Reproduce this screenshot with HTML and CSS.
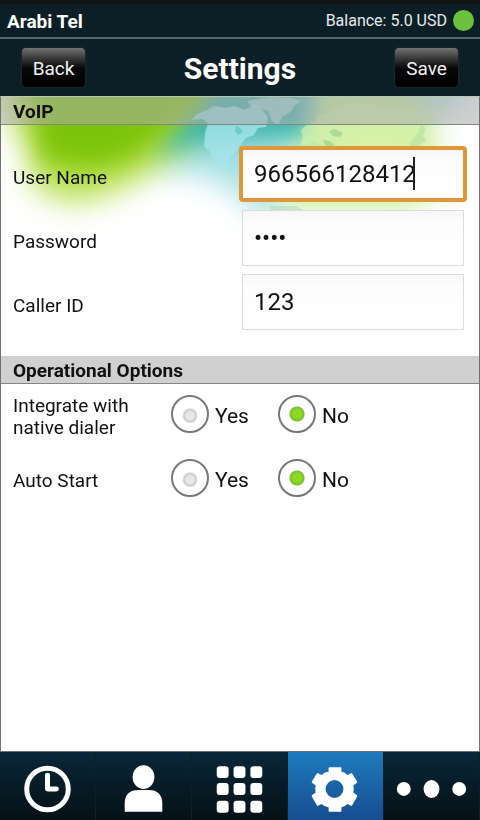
FILE: index.html
```html
<!DOCTYPE html>
<html lang="en">
<head>
<meta charset="utf-8">
<meta name="viewport" content="width=device-width, initial-scale=1">
<title>Arabi Tel - Settings</title>
<link rel="stylesheet" href="styles.css">
</head>
<body>
<div class="status">
  <strong class="brand">Arabi Tel</strong>
  <span class="balance">Balance: 5.0 USD</span>
  <span class="online"></span>
</div>
<header class="titlebar">
  <button class="action" type="button">Back</button>
  <h1>Settings</h1>
  <button class="action" type="button">Save</button>
</header>
<main class="panel">
  <svg class="art" viewBox="0 0 480 200" preserveAspectRatio="none" aria-hidden="true">
    <defs>
      <filter id="soft" x="-50%" y="-50%" width="200%" height="200%" color-interpolation-filters="sRGB"><feGaussianBlur stdDeviation="15"/></filter>
      <filter id="blend" x="-50%" y="-50%" width="200%" height="200%" color-interpolation-filters="sRGB"><feGaussianBlur stdDeviation="11"/></filter>
      <filter id="edge" x="-10%" y="-10%" width="120%" height="120%"><feGaussianBlur stdDeviation="0.7"/></filter>
    </defs>
    <path d="M150-60H480L460 8 300 40 275 130 225 86 150 66Z" fill="#a6dfe2" filter="url(#soft)"/>
    <path d="M-10-60H215L212 20 165 66 120 92 75 106 34 92 26 50 8 20Z" fill="#b4de46" filter="url(#soft)"/>
    <path d="M310-20H410L435 30 436 100 400 112 280 112 300 40Z" fill="#c9f09a" filter="url(#soft)"/>
    <path d="M214-40H315L308 40 250 42 190 48 150 54 178 28Z" fill="#3fb6ac" filter="url(#blend)"/>
    <path d="M15-60H222L200 12 165 34 128 62 88 70 42 62 36 30Z" fill="#7cc40a" filter="url(#blend)"/>
    <ellipse cx="378" cy="54" rx="44" ry="16" fill="#f1f08c" filter="url(#blend)"/>
    <g filter="url(#edge)">
      <path d="M191 23 197 17 207 13 214 9 226 11 234 9 245 13 254 8 262 12 268 20 266 30 258 31 254 38 246 41 240 48 236 55 230 60 229 66 233 70 234 77 230 75 225 71 219 70 214 65 210 55 204 49 205 35 208 26 202 22Z" fill="#a5e5ec" opacity=".8"/>
      <path d="M236 29 240 31 243 35 238 38 235 34Z" fill="#55bcb4" opacity=".6"/>
      <path d="M247 4 258 2 270 0 292 1 302 4 294 9 291 15 283 19 278 28 272 24 268 14 258 10 252 11Z" fill="#b5dfe0" opacity=".7"/>
      <path d="M301 48 303 39 301 33 308 27 315 25 318 18 327 17 334 11 343 9 352 5 370 7 390 10 412 13 432 17 437 22 428 27 427 34 420 46 414 52 340 53 336 46 328 43 322 47 314 44 308 48Z" fill="#d3f1ae" opacity=".7"/>
      <path d="M269 109 296 109 305 114 290 120 274 116Z" fill="#a5dcb4" opacity=".5"/>
      <path d="M329 34 335 32 343 36 341 40 333 39ZM323 43 330 44 335 48 327 50Z" fill="#8fcf94" opacity=".6"/>
      <path d="M414 41 419 36 422 27 426 31 424 40 428 44 421 47 418 52 410 48Z" fill="#b4dfa4" opacity=".6"/>
    </g>
  </svg>
  <section>
    <h2>VoIP</h2>
    <div class="fields">
      <label for="user">User Name</label>
      <div class="focused">
        <input id="user" type="text" value="966566128412">
        <span class="caret"></span>
      </div>
      <label for="pass">Password</label>
      <input id="pass" type="password" value="1234">
      <label for="caller">Caller ID</label>
      <input id="caller" type="text" value="123">
    </div>
  </section>
  <section>
    <h2>Operational Options</h2>
    <div class="options">
      <fieldset>
        <legend>Integrate with native dialer</legend>
        <label><input type="radio" name="native">Yes</label>
        <label><input type="radio" name="native" checked>No</label>
      </fieldset>
      <fieldset>
        <legend>Auto Start</legend>
        <label><input type="radio" name="auto">Yes</label>
        <label><input type="radio" name="auto" checked>No</label>
      </fieldset>
    </div>
  </section>
</main>
<nav class="tabs">
  <a href="#recent" aria-label="Recent calls">
    <svg viewBox="0 0 96 68"><circle cx="48" cy="37" r="21" fill="none" stroke="#fff" stroke-width="5"/><path d="M48 23V37H57" fill="none" stroke="#fff" stroke-width="5" stroke-linecap="round" stroke-linejoin="round"/></svg>
  </a>
  <a href="#contacts" aria-label="Contacts">
    <svg viewBox="0 0 96 68"><ellipse cx="48" cy="25" rx="11" ry="12"/><path d="M29 60V52Q29 38 43 38H53Q67 38 67 52V60Z"/></svg>
  </a>
  <a href="#keypad" aria-label="Keypad">
    <svg viewBox="0 0 96 68"><rect x="25" y="14" width="12" height="12" rx="3"/><rect x="42" y="14" width="12" height="12" rx="3"/><rect x="59" y="14" width="12" height="12" rx="3"/><rect x="25" y="31" width="12" height="12" rx="3"/><rect x="42" y="31" width="12" height="12" rx="3"/><rect x="59" y="31" width="12" height="12" rx="3"/><rect x="25" y="49" width="12" height="12" rx="3"/><rect x="42" y="49" width="12" height="12" rx="3"/><rect x="59" y="49" width="12" height="12" rx="3"/></svg>
  </a>
  <a class="current" href="#settings" aria-label="Settings">
    <svg viewBox="0 0 96 68"><path fill-rule="evenodd" d="M42 16H53V20Q57 21 60 24L64 22 69 30 65 33Q66 37 65 41L69 44 64 53 60 51Q57 54 53 55V59H42V55Q37 54 34 51L30 53 25 44 29 41Q28 37 29 33L25 30 30 22 34 24Q37 21 42 20ZM47 27A10 10 0 1 0 47 47A10 10 0 1 0 47 27Z" stroke="#fff" stroke-width="2" stroke-linejoin="round"/></svg>
  </a>
  <a href="#more" aria-label="More">
    <svg viewBox="0 0 96 68"><ellipse cx="20" cy="37" rx="7" ry="7"/><ellipse cx="48" cy="37" rx="8" ry="9"/><ellipse cx="76" cy="37" rx="7" ry="7"/></svg>
  </a>
</nav>
</body>
</html>
```
FILE: styles.css
```css
* {
  box-sizing: border-box;
}

body {
  margin: 0;
  min-height: 100vh;
  display: flex;
  flex-direction: column;
  background: #fff;
  color: #111;
  font: 19px/22px Roboto, "Liberation Sans", sans-serif;
}

.status {
  display: flex;
  align-items: center;
  height: 39px;
  padding: 2px 6px 0 7px;
  border-top: 4px solid #141414;
  border-bottom: 2px solid #50696c;
  background: #0d1f26;
  color: #fff;
}

.brand {
  flex: 1;
  font-weight: 700;
}

.balance {
  padding-bottom: 2px;
  font-size: 16px;
  color: #e6ecee;
}

.online {
  width: 21px;
  height: 21px;
  margin: 0 0 3px 6px;
  border-radius: 50%;
  background: #6cc23e;
}

.titlebar {
  display: flex;
  align-items: center;
  justify-content: space-between;
  height: 57px;
  padding: 0 22px;
  background: #0d1f26;
}

h1 {
  margin: 2px 0 0;
  font-size: 30px;
  line-height: 36px;
  color: #fff;
}

.action {
  width: 63px;
  height: 39px;
  padding: 2px 0 0;
  border: 0;
  border-radius: 4px;
  background: linear-gradient(#737373, #3c3c3c 25%, #070707 52%, #000);
  box-shadow: 0 0 2px #39413f;
  color: #f2f2f2;
  font: 19px/22px Roboto, "Liberation Sans", sans-serif;
}

.panel {
  position: relative;
  flex: 1;
  border: 1px solid #707070;
  border-top-color: #b9c9b4;
}

.art {
  position: absolute;
  inset: 0 0 auto;
  width: 100%;
  height: 200px;
  z-index: -1;
}

h2 {
  margin: 0;
  padding: 4px 12px 1px;
  border-bottom: 1px solid #858585;
  background: rgba(170, 170, 170, 0.55);
  font-size: 19px;
  line-height: 22px;
}

.fields {
  display: grid;
  grid-template-columns: 1fr 222px;
  grid-auto-rows: 56px;
  gap: 8px 0;
  align-items: center;
  padding: 21px 15px 26px 12px;
}

.fields > label {
  padding-top: 8px;
}

.fields input {
  display: block;
  width: 100%;
  height: 56px;
  padding: 0 11px;
  border: 1px solid #dcdcdc;
  outline: 0;
  background: linear-gradient(#f6f6f6, #fdfdfd 20%, #fff);
  color: #111;
  font: 24px/30px Roboto, "Liberation Sans", sans-serif;
}

.focused {
  position: relative;
  margin: 0 -3px;
}

.fields .focused input {
  border: 4px solid #e0973a;
  border-radius: 4px;
}

.caret {
  position: absolute;
  left: 174px;
  top: 11px;
  width: 2px;
  height: 33px;
  background: #222;
}

.options {
  padding: 0 12px;
}

fieldset {
  display: flex;
  align-items: center;
  height: 64px;
  margin: 0;
  padding: 0;
  border: 0;
}

legend {
  float: left;
  width: 158px;
  padding: 2px 30px 0 0;
}

fieldset label {
  display: flex;
  align-items: center;
  gap: 6px;
  width: 107px;
  font-size: 21px;
}

input[type="radio"] {
  appearance: none;
  width: 38px;
  height: 38px;
  margin: 0 0 4px;
  border: 2px solid #77777a;
  border-radius: 50%;
  background: radial-gradient(circle at 50% 55%, #e8e8e8 4px, #c8c8c8 6px, #fff 8px);
}

input[type="radio"]:checked {
  background: radial-gradient(circle, #8ada20 4px, #78bd32 7px, #fff 8px);
}

.tabs {
  display: grid;
  grid-template-columns: repeat(5, 1fr);
  height: 68px;
}

.tabs a {
  background: linear-gradient(#092638, #061116);
  border-right: 1px solid #0c2027;
}

.tabs .current {
  background: linear-gradient(#1d7bbd, #174d8f);
}

.tabs svg {
  display: block;
  width: 100%;
  height: 68px;
  fill: #fff;
}
```
